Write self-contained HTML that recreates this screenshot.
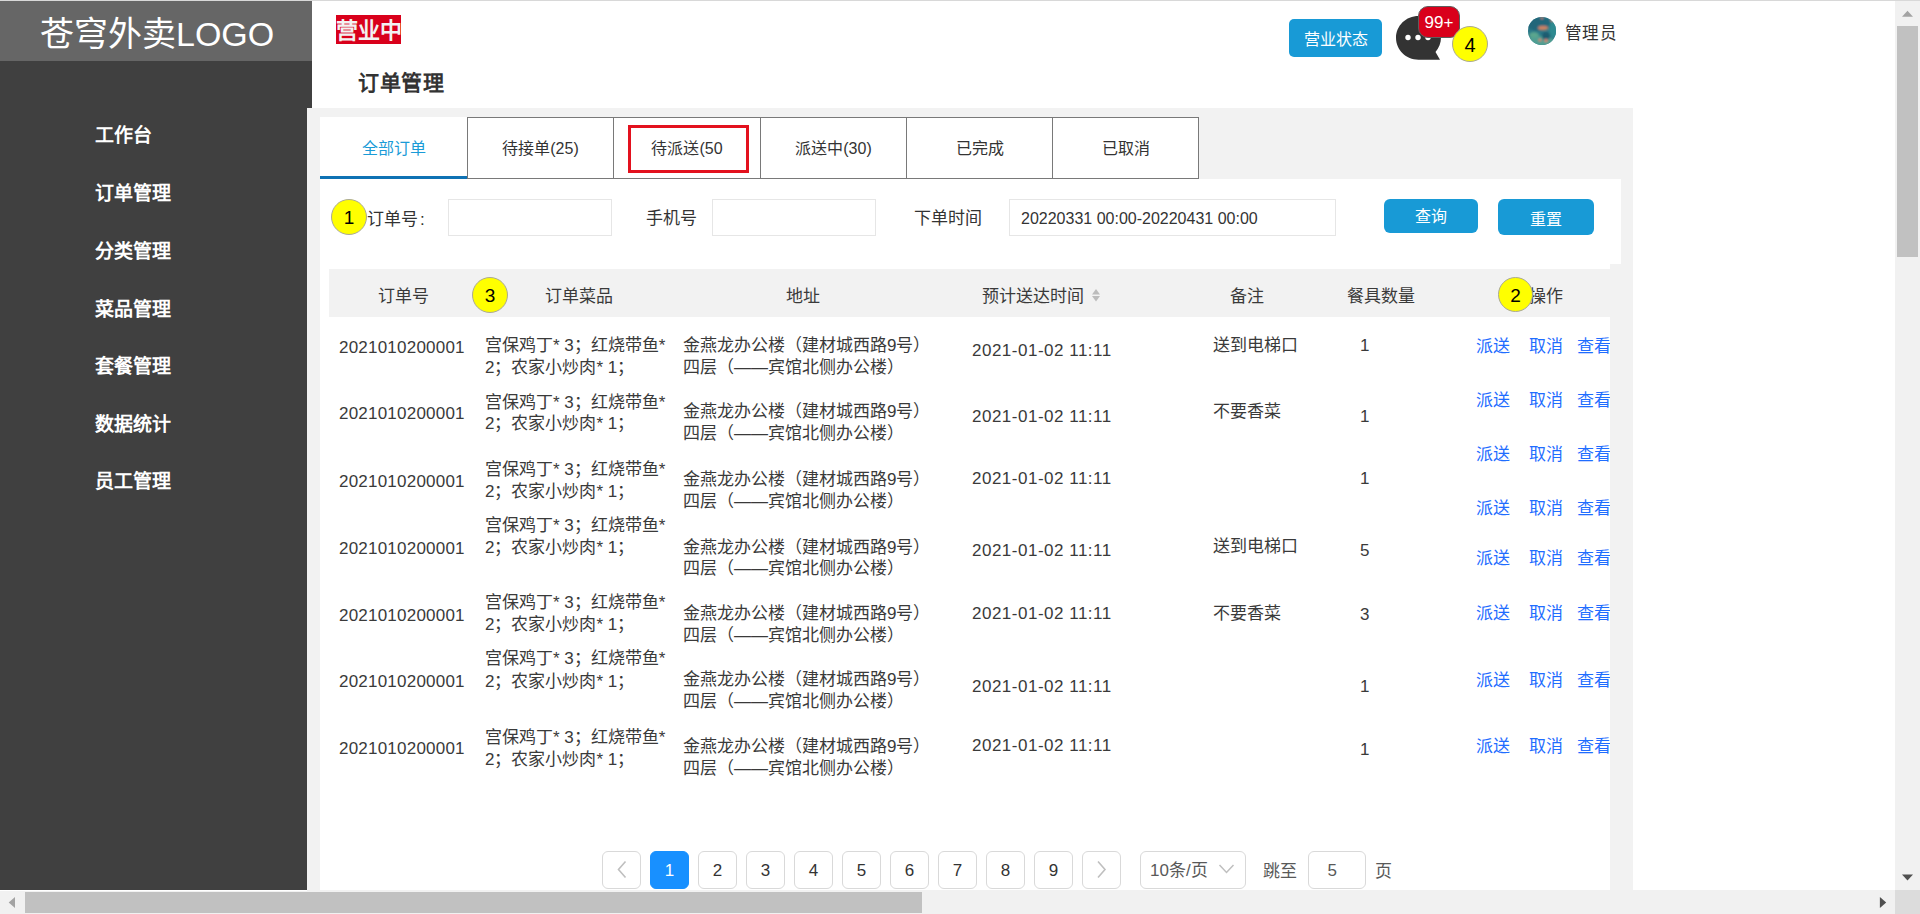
<!DOCTYPE html>
<html lang="zh-CN">
<head>
<meta charset="utf-8">
<title>订单管理</title>
<style>
html,body{margin:0;padding:0;}
body{width:1920px;height:914px;overflow:hidden;position:relative;background:#fff;font-family:"Liberation Sans",sans-serif;color:#333;}
.a{position:absolute;white-space:nowrap;line-height:1;}
.bg{position:absolute;}
.menu{position:absolute;left:95px;font-size:19px;font-weight:bold;color:#fff;line-height:20px;white-space:nowrap;}
.tab{position:absolute;top:117px;height:60px;border:1px solid #797979;background:#fff;font-size:16px;line-height:62px;text-align:center;color:#333;box-sizing:content-box;}
.yc{position:absolute;border-radius:50%;background:#ff0;border:1.5px solid #aaa996;box-sizing:border-box;text-align:center;color:#000;font-size:19px;padding-top:1px;}
.inp{position:absolute;top:199px;height:37px;border:1px solid #e6e6e6;box-sizing:border-box;background:#fff;}
.btn{position:absolute;background:#189ad6;border-radius:6px;color:#fff;font-size:16px;text-align:center;}
.t{position:absolute;white-space:nowrap;font-size:17px;line-height:22px;color:#3a3a3a;}
.on{letter-spacing:0.22px;}
.tm{letter-spacing:0.5px;}
.lk{position:absolute;white-space:nowrap;font-size:17px;line-height:24px;color:#1f6dff;}
.pg{position:absolute;top:851px;width:37px;height:36px;border:1px solid #d9d9d9;border-radius:6px;background:#fff;font-size:17px;line-height:38px;text-align:center;color:#333;}
</style>
</head>
<body>
<!-- backgrounds -->
<div class="bg" style="left:0;top:0;width:1920px;height:1px;background:#d8d8d8"></div>
<div class="bg" style="left:0;top:1px;width:312px;height:60px;background:#666"></div>
<div class="bg" style="left:0;top:61px;width:312px;height:829px;background:#404040"></div>
<div class="bg" style="left:307px;top:108px;width:1326px;height:782px;background:#f2f2f2"></div>

<!-- logo -->
<div class="a" style="left:40px;top:17px;font-size:34px;color:#fff;">苍穹外卖LOGO</div>

<!-- sidebar menu -->
<div class="menu" style="top:126px">工作台</div>
<div class="menu" style="top:184px">订单管理</div>
<div class="menu" style="top:242px">分类管理</div>
<div class="menu" style="top:299.5px">菜品管理</div>
<div class="menu" style="top:357px">套餐管理</div>
<div class="menu" style="top:415px">数据统计</div>
<div class="menu" style="top:472px">员工管理</div>

<!-- header -->
<div class="bg" style="left:336px;top:15px;width:65px;height:29px;background:#d9001b"></div>
<div class="a" style="left:336px;top:20px;font-size:22px;font-weight:bold;color:#f2f2f2;">营业中</div>
<div class="a" style="left:358px;top:72px;font-size:21px;letter-spacing:0.6px;font-weight:bold;color:#333;">订单管理</div>

<div class="btn" style="left:1289px;top:19px;width:93px;height:38px;line-height:42px;border-radius:5px;">营业状态</div>

<svg style="position:absolute;left:1396px;top:16px" width="46" height="45" viewBox="0 0 46 45">
<path d="M22.5,0 C35,0 45,9.5 45,21.5 C45,27 43,32 39.5,36 L44,43.7 L22.5,43.7 C10,43.7 0,34 0,21.8 C0,9.7 10,0 22.5,0 Z" fill="#333"/>
<circle cx="12" cy="21.5" r="2.7" fill="#fff"/><circle cx="22" cy="21.5" r="2.7" fill="#fff"/><circle cx="32" cy="21.5" r="2.7" fill="#fff"/>
</svg>
<div class="a" style="left:1418px;top:6px;width:42px;height:32px;box-sizing:border-box;border:1px solid #5e5e5e;border-radius:10px;background:#d9001b;color:#fff;font-size:17px;line-height:31px;text-align:center;">99+</div>
<div class="yc" style="left:1452px;top:26px;width:36px;height:36px;line-height:35px;font-size:20px;">4</div>

<svg style="position:absolute;left:1528px;top:17px" width="28" height="28" viewBox="0 0 28 28"><defs><clipPath id="av"><circle cx="14" cy="14" r="14"/></clipPath><filter id="bl"><feGaussianBlur stdDeviation="0.8"/></filter></defs>
<g clip-path="url(#av)"><rect width="28" height="28" fill="#2a7888"/><g filter="url(#bl)">
<ellipse cx="11" cy="7" rx="12" ry="7" fill="#22667a"/>
<ellipse cx="26" cy="12" rx="5" ry="9" fill="#2f8a90"/>
<ellipse cx="15" cy="11" rx="5" ry="2.2" fill="#c98264"/>
<ellipse cx="12" cy="25" rx="15" ry="6" fill="#4f9e92"/>
<ellipse cx="6" cy="18" rx="5" ry="3" fill="#5aa58e"/>
<circle cx="18" cy="19" r="4" fill="#1f5c70"/>
<circle cx="12" cy="23" r="1.6" fill="#d9846b"/><circle cx="18" cy="23.5" r="1.8" fill="#d9846b"/>
<circle cx="24" cy="3" r="1.5" fill="#d98a6a"/><circle cx="14" cy="1" r="1.2" fill="#c9806a"/>
</g></g></svg>
<div class="a" style="left:1565px;top:24.5px;font-size:16.5px;color:#333;letter-spacing:0.3px;">管理员</div>

<!-- tabs -->
<div class="bg" style="left:320px;top:117px;width:147px;height:61px;background:#fff"></div>
<div class="bg" style="left:320px;top:175.5px;width:147px;height:3px;background:#0f72b4"></div>
<div class="a" style="left:362px;top:140px;font-size:16px;line-height:18px;color:#1a9bd7;">全部订单</div>
<div class="tab" style="left:467px;width:145px;">待接单(25)</div>
<div class="tab" style="left:613px;width:146px;">待派送(50</div>
<div class="tab" style="left:760px;width:145px;">派送中(30)</div>
<div class="tab" style="left:906px;width:145px;">已完成</div>
<div class="tab" style="left:1052px;width:145px;">已取消</div>
<div class="bg" style="left:628px;top:125px;width:121px;height:48px;box-sizing:border-box;border:3px solid #e3111e"></div>

<!-- filter panel -->
<div class="bg" style="left:320px;top:179px;width:1301px;height:85px;background:#fff"></div>
<div class="yc" style="left:331px;top:199px;width:36px;height:36px;line-height:34px;">1</div>
<div class="a" style="left:367px;top:209.5px;font-size:17px;line-height:20px;">订单号<span style="margin-left:2px">:</span></div>
<div class="inp" style="left:448px;width:164px;"></div>
<div class="a" style="left:646px;top:209px;font-size:17px;line-height:20px;">手机号</div>
<div class="inp" style="left:712px;width:164px;"></div>
<div class="a" style="left:914px;top:209px;font-size:17px;line-height:20px;">下单时间</div>
<div class="inp" style="left:1009px;width:327px;"></div>
<div class="a" style="left:1021px;top:210px;font-size:16px;line-height:18px;">20220331 00:00-20220431 00:00</div>
<div class="btn" style="left:1384px;top:199px;width:94px;height:34px;line-height:36px;">查询</div>
<div class="btn" style="left:1498px;top:199px;width:96px;height:36px;line-height:41px;">重置</div>

<!-- table panel -->
<div class="bg" style="left:320px;top:264px;width:1290px;height:626px;background:#fff;overflow:hidden">
</div>
<div class="bg" style="left:329px;top:269px;width:1281px;height:48px;background:#f2f2f2"></div>
<div class="t" style="left:378px;top:285.5px;">订单号</div>
<div class="t" style="left:545px;top:285.5px;">订单菜品</div>
<div class="t" style="left:786px;top:285.5px;">地址</div>
<div class="t" style="left:982px;top:285.5px;">预计送达时间</div>
<svg style="position:absolute;left:1091px;top:288px" width="10" height="14" viewBox="0 0 10 14"><path d="M1,6.5 L5,1 L9,6.5 Z M1,8 L9,8 L5,13.5 Z" fill="#bcbcbc"/></svg>
<div class="t" style="left:1230px;top:285.5px;">备注</div>
<div class="t" style="left:1347px;top:285.5px;">餐具数量</div>
<div class="t" style="left:1528.5px;top:285.5px;">操作</div>
<div class="yc" style="left:472px;top:277px;width:36px;height:36px;line-height:34px;">3</div>
<div class="yc" style="left:1498px;top:277px;width:35px;height:35px;line-height:33px;">2</div>

<!-- pagination -->
<div class="pg" style="left:602px;"><svg width="37" height="36" viewBox="0 0 37 36" style="position:absolute;left:0;top:0"><path d="M22.5,9.5 L15.5,17.5 L22.5,25.5" fill="none" stroke="#bfbfbf" stroke-width="1.6"/></svg></div>
<div class="pg" style="left:650px;background:#1890ff;border-color:#1890ff;color:#fff;">1</div>
<div class="pg" style="left:698px;">2</div>
<div class="pg" style="left:746px;">3</div>
<div class="pg" style="left:794px;">4</div>
<div class="pg" style="left:842px;">5</div>
<div class="pg" style="left:890px;">6</div>
<div class="pg" style="left:938px;">7</div>
<div class="pg" style="left:986px;">8</div>
<div class="pg" style="left:1034px;">9</div>
<div class="pg" style="left:1082px;"><svg width="37" height="36" viewBox="0 0 37 36" style="position:absolute;left:0;top:0"><path d="M15,9.5 L22,17.5 L15,25.5" fill="none" stroke="#bfbfbf" stroke-width="1.6"/></svg></div>
<div class="pg" style="left:1140px;width:104px;text-align:left;"><span style="position:absolute;left:9px;top:0;color:#595959">10条/页</span><svg width="20" height="12" viewBox="0 0 20 12" style="position:absolute;left:77px;top:11px"><path d="M1.5,2 L8.5,9.5 L15.5,2" fill="none" stroke="#bfbfbf" stroke-width="1.5"/></svg></div>
<div class="a" style="left:1263px;top:861.5px;font-size:17px;line-height:20px;color:#595959">跳至</div>
<div class="pg" style="left:1308px;width:56px;color:#595959;text-align:left;box-sizing:content-box;"><span style="position:absolute;left:18.5px;top:0">5</span></div>
<div class="a" style="left:1375px;top:862px;font-size:17px;line-height:20px;color:#595959">页</div>

<!-- scrollbars -->
<div class="bg" style="left:0;top:890px;width:1895px;height:24px;background:#f1f1f1"></div>
<div class="bg" style="left:0;top:890px;width:307px;height:1px;background:#fff"></div>
<div class="bg" style="left:25px;top:892px;width:897px;height:21px;background:#c1c1c1"></div>
<svg style="position:absolute;left:0;top:891px" width="25" height="23"><path d="M8.7,11.5 L15,6 L15,17 Z" fill="#a3a3a3"/></svg>
<svg style="position:absolute;left:1870px;top:891px" width="25" height="23"><path d="M16.2,11.5 L9.9,6 L9.9,17 Z" fill="#505050"/></svg>
<div class="bg" style="left:1895px;top:1px;width:25px;height:889px;background:#f1f1f1"></div>
<div class="bg" style="left:1897px;top:26px;width:21px;height:231px;background:#c1c1c1"></div>
<svg style="position:absolute;left:1895px;top:1px" width="25" height="25"><path d="M12.5,9.7 L7,15.8 L18,15.8 Z" fill="#a3a3a3"/></svg>
<svg style="position:absolute;left:1895px;top:865px" width="25" height="25"><path d="M12.5,15.5 L7,9.5 L18,9.5 Z" fill="#505050"/></svg>
<div class="bg" style="left:1895px;top:890px;width:25px;height:24px;background:#dcdcdc"></div>

<!-- rows -->
<div class="t on" style="left:339px;top:337.3px;">2021010200001</div>
<div class="t" style="left:485px;top:335px;">宫保鸡丁* 3；红烧带鱼*</div>
<div class="t" style="left:485px;top:356.7px;">2；农家小炒肉* 1；</div>
<div class="t" style="left:683px;top:335px;">金燕龙办公楼（建材城西路9号）</div>
<div class="t" style="left:683px;top:357px;">四层（——宾馆北侧办公楼）</div>
<div class="t tm" style="left:972px;top:340px;">2021-01-02 11:11</div>
<div class="t" style="left:1213px;top:334.8px;">送到电梯口</div>
<div class="t" style="left:1360px;top:334.8px;">1</div>
<div class="t on" style="left:339px;top:403px;">2021010200001</div>
<div class="t" style="left:485px;top:391.7px;">宫保鸡丁* 3；红烧带鱼*</div>
<div class="t" style="left:485px;top:413px;">2；农家小炒肉* 1；</div>
<div class="t" style="left:683px;top:400.7px;">金燕龙办公楼（建材城西路9号）</div>
<div class="t" style="left:683px;top:422.7px;">四层（——宾馆北侧办公楼）</div>
<div class="t tm" style="left:972px;top:405.6px;">2021-01-02 11:11</div>
<div class="t" style="left:1213px;top:401.4px;">不要香菜</div>
<div class="t" style="left:1360px;top:406.3px;">1</div>
<div class="t on" style="left:339px;top:471px;">2021010200001</div>
<div class="t" style="left:485px;top:459px;">宫保鸡丁* 3；红烧带鱼*</div>
<div class="t" style="left:485px;top:481px;">2；农家小炒肉* 1；</div>
<div class="t" style="left:683px;top:469.3px;">金燕龙办公楼（建材城西路9号）</div>
<div class="t" style="left:683px;top:491px;">四层（——宾馆北侧办公楼）</div>
<div class="t tm" style="left:972px;top:468.3px;">2021-01-02 11:11</div>
<div class="t" style="left:1360px;top:468.3px;">1</div>
<div class="t on" style="left:339px;top:537.7px;">2021010200001</div>
<div class="t" style="left:485px;top:515px;">宫保鸡丁* 3；红烧带鱼*</div>
<div class="t" style="left:485px;top:536.7px;">2；农家小炒肉* 1；</div>
<div class="t" style="left:683px;top:536.7px;">金燕龙办公楼（建材城西路9号）</div>
<div class="t" style="left:683px;top:558.3px;">四层（——宾馆北侧办公楼）</div>
<div class="t tm" style="left:972px;top:540.2px;">2021-01-02 11:11</div>
<div class="t" style="left:1213px;top:535.6px;">送到电梯口</div>
<div class="t" style="left:1360px;top:540.2px;">5</div>
<div class="t on" style="left:339px;top:605px;">2021010200001</div>
<div class="t" style="left:485px;top:591.7px;">宫保鸡丁* 3；红烧带鱼*</div>
<div class="t" style="left:485px;top:614px;">2；农家小炒肉* 1；</div>
<div class="t" style="left:683px;top:603.3px;">金燕龙办公楼（建材城西路9号）</div>
<div class="t" style="left:683px;top:625px;">四层（——宾馆北侧办公楼）</div>
<div class="t tm" style="left:972px;top:602.5px;">2021-01-02 11:11</div>
<div class="t" style="left:1213px;top:603.2px;">不要香菜</div>
<div class="t" style="left:1360px;top:604.3px;">3</div>
<div class="t on" style="left:339px;top:670.7px;">2021010200001</div>
<div class="t" style="left:485px;top:648.3px;">宫保鸡丁* 3；红烧带鱼*</div>
<div class="t" style="left:485px;top:670.7px;">2；农家小炒肉* 1；</div>
<div class="t" style="left:683px;top:669.3px;">金燕龙办公楼（建材城西路9号）</div>
<div class="t" style="left:683px;top:691px;">四层（——宾馆北侧办公楼）</div>
<div class="t tm" style="left:972px;top:676.2px;">2021-01-02 11:11</div>
<div class="t" style="left:1360px;top:676.2px;">1</div>
<div class="t on" style="left:339px;top:738.3px;">2021010200001</div>
<div class="t" style="left:485px;top:726.7px;">宫保鸡丁* 3；红烧带鱼*</div>
<div class="t" style="left:485px;top:749px;">2；农家小炒肉* 1；</div>
<div class="t" style="left:683px;top:736px;">金燕龙办公楼（建材城西路9号）</div>
<div class="t" style="left:683px;top:757.7px;">四层（——宾馆北侧办公楼）</div>
<div class="t tm" style="left:972px;top:735.3px;">2021-01-02 11:11</div>
<div class="t" style="left:1360px;top:738.9px;">1</div>
<div class="bg" style="left:0;top:0;width:1610px;height:890px;overflow:hidden">
<div class="lk" style="left:1476px;top:334.8px;">派送</div>
<div class="lk" style="left:1529px;top:334.8px;">取消</div>
<div class="lk" style="left:1577px;top:334.8px;">查看</div>
<div class="lk" style="left:1476px;top:388.6px;">派送</div>
<div class="lk" style="left:1529px;top:388.6px;">取消</div>
<div class="lk" style="left:1577px;top:388.6px;">查看</div>
<div class="lk" style="left:1476px;top:442.8px;">派送</div>
<div class="lk" style="left:1529px;top:442.8px;">取消</div>
<div class="lk" style="left:1577px;top:442.8px;">查看</div>
<div class="lk" style="left:1476px;top:496.6px;">派送</div>
<div class="lk" style="left:1529px;top:496.6px;">取消</div>
<div class="lk" style="left:1577px;top:496.6px;">查看</div>
<div class="lk" style="left:1476px;top:547.3px;">派送</div>
<div class="lk" style="left:1529px;top:547.3px;">取消</div>
<div class="lk" style="left:1577px;top:547.3px;">查看</div>
<div class="lk" style="left:1476px;top:601.8px;">派送</div>
<div class="lk" style="left:1529px;top:601.8px;">取消</div>
<div class="lk" style="left:1577px;top:601.8px;">查看</div>
<div class="lk" style="left:1476px;top:668.7px;">派送</div>
<div class="lk" style="left:1529px;top:668.7px;">取消</div>
<div class="lk" style="left:1577px;top:668.7px;">查看</div>
<div class="lk" style="left:1476px;top:735.3px;">派送</div>
<div class="lk" style="left:1529px;top:735.3px;">取消</div>
<div class="lk" style="left:1577px;top:735.3px;">查看</div>
</div>
<!-- /rows -->
</body>
</html>
